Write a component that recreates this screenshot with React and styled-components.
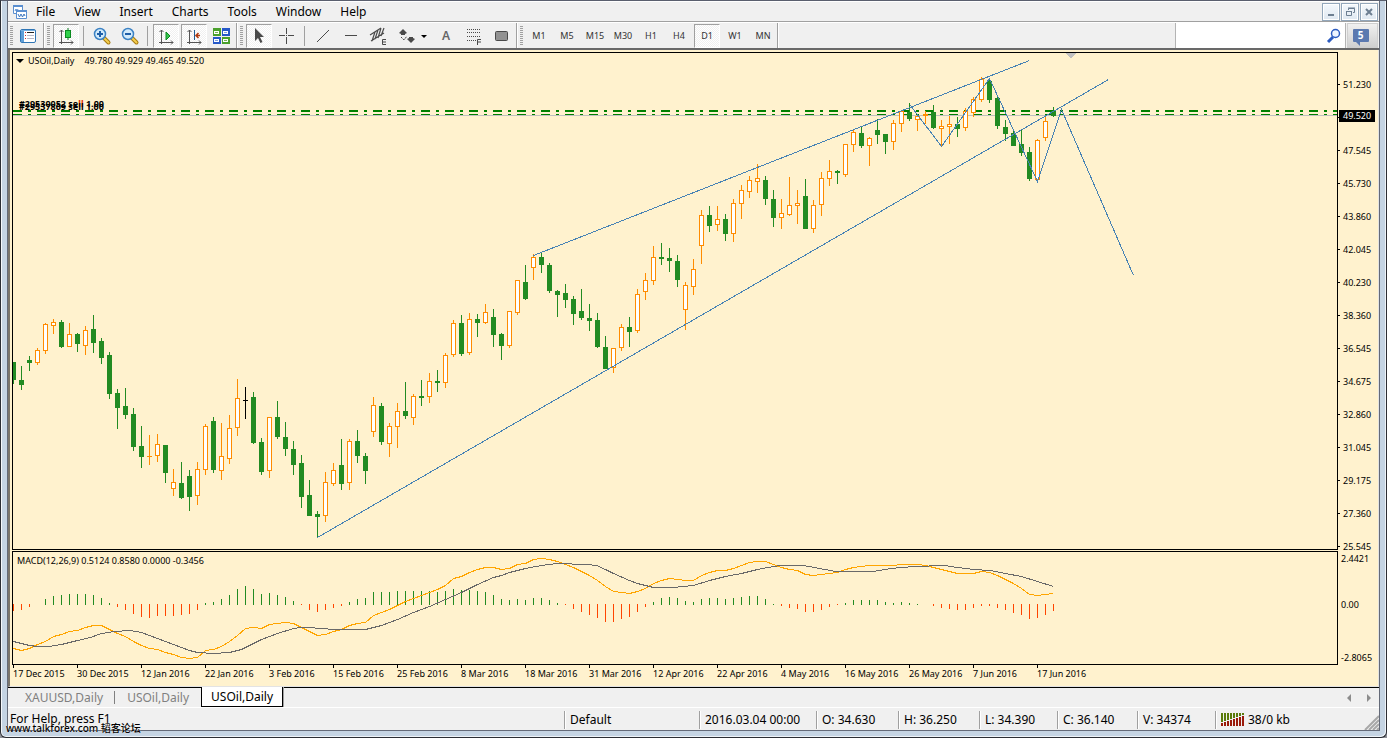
import styled, { createGlobalStyle, css } from 'styled-components'

const colors = {
  face: '#f0f0f0',
  chart: '#fff2ce',
  bear: '#228b22',
  bull: '#ff8c00',
  line: '#4682b4',
  order: '#008000',
  histogramDown: '#ff4500',
  macd: '#ffa500',
  signal: '#696969',
  icon: '#4a4a4a',
}

const MENU = ['File', 'View', 'Insert', 'Charts', 'Tools', 'Window', 'Help']
const TIMEFRAMES = ['M1', 'M5', 'M15', 'M30', 'H1', 'H4', 'D1', 'W1', 'MN']
const TABS = ['XAUUSD,Daily', 'USOil,Daily', 'USOil,Daily']
const ACTIVE_TAB = 2

// the second tick has no label of its own, the current price lies over it
const PRICES = [
  '51.230', '', '47.545', '45.730', '43.860', '42.045', '40.230', '38.360',
  '36.545', '34.675', '32.860', '31.045', '29.175', '27.360', '25.545',
]
const CURRENT_PRICE = '49.520'

const DATES = [
  '17 Dec 2015', '30 Dec 2015', '12 Jan 2016', '22 Jan 2016', '3 Feb 2016', '15 Feb 2016',
  '25 Feb 2016', '8 Mar 2016', '18 Mar 2016', '31 Mar 2016', '12 Apr 2016', '22 Apr 2016',
  '4 May 2016', '16 May 2016', '26 May 2016', '7 Jun 2016', '17 Jun 2016',
]

const STATUS = [
  { text: 'Default', width: 135 },
  { text: '2016.03.04 00:00', width: 117 },
  { text: 'O: 34.630', width: 82 },
  { text: 'H: 36.250', width: 81 },
  { text: 'L: 34.390', width: 78 },
  { text: 'C: 36.140', width: 80 },
  { text: 'V: 34374', width: 78 },
]

// [high, body top, body bottom, low, up?] one row for each day
const CANDLES = [
  [362, 362, 380, 384], [366, 380, 385, 390], [356, 360, 363, 371], [348, 350, 363, 365, 1],
  [323, 324, 351, 354, 1], [319, 322, 326, 334, 1], [320, 322, 347, 348], [323, 334, 347, 347, 1],
  [333, 334, 344, 352], [326, 330, 346, 355, 1], [315, 329, 343, 353], [338, 341, 358, 364],
  [352, 355, 394, 399], [389, 393, 408, 429], [388, 406, 415, 419], [408, 414, 447, 451],
  [426, 446, 457, 468], [435, 456, 457, 465, 1], [434, 444, 456, 462, 1], [445, 445, 473, 483],
  [469, 482, 489, 496, 1], [462, 483, 498, 499], [470, 476, 497, 511], [462, 469, 496, 505, 1],
  [424, 426, 470, 475, 1], [417, 421, 470, 473], [423, 456, 471, 480, 1], [415, 428, 459, 464, 1],
  [379, 398, 428, 436, 1], [387, 400, 401, 419], [392, 397, 443, 444], [438, 442, 472, 475],
  [417, 417, 471, 478, 1], [401, 417, 437, 439], [422, 437, 449, 456], [441, 449, 465, 475],
  [455, 463, 497, 508], [480, 495, 516, 516], [511, 514, 517, 538], [472, 482, 516, 522, 1],
  [463, 470, 484, 486, 1], [439, 465, 484, 490], [439, 441, 483, 490, 1], [430, 441, 456, 463],
  [453, 456, 471, 484], [397, 405, 432, 437, 1], [403, 406, 442, 445], [423, 426, 444, 457, 1],
  [403, 411, 427, 448, 1], [382, 411, 416, 419], [394, 396, 418, 425, 1], [380, 396, 398, 406],
  [373, 381, 397, 403, 1], [370, 381, 383, 392], [353, 355, 383, 388, 1], [320, 323, 355, 357, 1],
  [315, 323, 354, 356], [313, 319, 353, 355, 1], [314, 319, 323, 337], [304, 312, 323, 324, 1],
  [309, 317, 335, 347], [333, 334, 346, 360], [311, 311, 346, 348, 1], [280, 280, 313, 315, 1],
  [265, 282, 299, 300], [254, 257, 268, 280, 1], [253, 257, 265, 273], [263, 265, 291, 293],
  [290, 291, 295, 317], [284, 293, 300, 308], [296, 299, 314, 325], [289, 311, 318, 320],
  [304, 318, 321, 331], [313, 320, 347, 348], [336, 347, 369, 369], [348, 348, 368, 373, 1],
  [324, 327, 348, 351, 1], [317, 327, 332, 347], [289, 294, 331, 333, 1], [273, 280, 292, 300, 1],
  [246, 257, 281, 285, 1], [243, 257, 259, 265], [248, 258, 261, 272], [255, 261, 280, 287],
  [282, 285, 310, 330, 1], [259, 269, 287, 295, 1], [210, 215, 246, 264, 1], [206, 215, 226, 232],
  [206, 219, 225, 231, 1], [214, 219, 234, 241], [199, 203, 234, 242, 1], [185, 190, 204, 219, 1],
  [176, 180, 192, 198, 1], [164, 178, 182, 193, 1], [176, 180, 199, 205], [190, 199, 218, 227],
  [199, 213, 218, 229, 1], [177, 205, 215, 216, 1], [190, 203, 206, 224, 1], [179, 196, 229, 229],
  [200, 205, 229, 233, 1], [172, 178, 205, 216, 1], [160, 171, 179, 186, 1], [170, 171, 173, 184],
  [144, 144, 175, 177, 1], [130, 132, 145, 152, 1], [127, 133, 146, 148], [137, 138, 146, 166, 1],
  [119, 130, 135, 144], [134, 134, 142, 154], [120, 123, 142, 150, 1], [111, 111, 124, 132, 1],
  [103, 112, 119, 121], [115, 116, 120, 131, 1], [111, 114, 116, 124, 1], [105, 112, 128, 129],
  [120, 126, 129, 147, 1], [116, 124, 127, 144, 1], [117, 124, 129, 137], [108, 111, 128, 131, 1],
  [97, 99, 113, 117, 1], [77, 79, 100, 102, 1], [78, 81, 100, 103], [95, 98, 126, 129],
  [120, 127, 134, 141], [129, 133, 146, 146], [130, 144, 153, 156], [147, 152, 179, 181],
  [139, 140, 180, 181, 1], [117, 121, 138, 141, 1], [107, 111, 116, 117],
]
const DOJI = 29

const HISTOGRAM = [
  -7, -6, -3, 0, 6, 9, 10, 11, 11, 11, 10, 7, 2, -3, -6, -10, -13, -14, -12, -12, -12, -11, -10,
  -6, 2, 3, 6, 10, 16, 19, 16, 11, 12, 10, 8, 4, -1, -6, -8, -6, -4, -2, 3, 6, 7, 13, 13, 13, 14,
  14, 14, 14, 14, 13, 14, 16, 15, 15, 14, 13, 10, 6, 5, 6, 5, 7, 7, 5, 2, -1, -5, -8, -11, -14,
  -18, -18, -15, -13, -8, -3, 3, 7, 8, 7, 4, 3, 6, 7, 7, 6, 7, 8, 9, 9, 6, 1, -2, -4, -5, -8, -8,
  -6, -3, -1, 2, 5, 5, 5, 5, 3, 2, 3, 2, 1, 0, -2, -4, -5, -6, -6, -4, -2, -2, -4, -6, -9, -11,
  -15, -14, -11, -7,
]

const MACD_LINE = [
  648, 650, 648, 644, 641, 636, 634, 631, 630, 627, 625, 625, 629, 633, 636, 641, 645, 648, 649,
  652, 654, 657, 658, 657, 650, 649, 646, 641, 635, 628, 627, 628, 624, 623, 622, 623, 627, 631,
  635, 634, 631, 629, 625, 623, 622, 615, 612, 609, 605, 601, 598, 595, 592, 589, 585, 578, 576,
  572, 569, 567, 567, 569, 568, 564, 563, 559, 558, 559, 561, 564, 567, 571, 575, 580, 586, 591,
  592, 593, 591, 588, 583, 580, 578, 579, 580, 580, 575, 572, 570, 570, 568, 565, 562, 561, 561,
  564, 567, 569, 570, 574, 575, 574, 573, 572, 569, 567, 566, 565, 565, 565, 565, 564, 564, 564,
  565, 567, 569, 571, 573, 573, 573, 571, 572, 575, 579, 583, 588, 594, 595, 594, 593,
]

const SIGNAL_POINTS =
  '13,641 21,643 29,645 37,646 48,646 61,644 77,640 90,637 101,633 114,631 129,630 141,632 149,635 165,641 181,647 189,650 197,652 213,653 229,652 241,649 253,643 261,639 277,633 293,628 301,627 312,627 317,628 337,629 365,629 381,625 397,619 413,612 429,606 445,599 461,592 477,584 493,577 501,575 509,572 525,568 541,565 557,563 586,564 596,565 605,569 613,573 629,580 637,583 653,587 672,587 693,585 709,580 725,576 741,573 757,569 773,566 781,565 802,565 814,567 835,571 873,571 890,568 913,566 944,565 957,567 973,569 990,570 1005,573 1021,576 1037,581 1053,586'

const TREND_LINES = [
  '533,255 1029,60',
  '317,537 1108,79',
  '910,105 941,146 989,78 1037,181 1061,109 1133,275',
]

const BAR_STEP = 8
const FIRST_BAR = 13
const barX = (index) => FIRST_BAR + index * BAR_STEP

const Candle = ({ x, data, doji }) => {
  const [high, top, bottom, low, up] = data
  const color = doji ? '#000' : up ? colors.bull : colors.bear
  return (
    <g>
      <rect x={x} y={high} width={1} height={low - high} fill={color} />
      <rect x={x - 2} y={top} width={5} height={bottom - top} fill={color} />
      {up && bottom - top > 2 && (
        <rect x={x - 1} y={top + 1} width={3} height={bottom - top - 2} fill='#fff' />
      )}
    </g>
  )
}

const PriceChart = () => (
  <Canvas role='img' aria-label='USOil daily candlesticks'>
    <g transform='translate(0 -53)' stroke={colors.order} strokeDasharray='9 6 3 6'>
      <line x2='100%' y1={111} y2={111} strokeWidth={2} />
      <line x2='100%' y1={114.5} y2={114.5} />
    </g>
    <g transform='translate(-13 -53)'>
      <rect x={13} y={115} width='100%' height={1} fill='#c0c0c0' />
      <path d='M1065 53h11l-5 5h-1z' fill='#c0c0c0' />
      {CANDLES.map((data, index) => (
        <Candle key={index} x={barX(index)} data={data} doji={index === DOJI} />
      ))}
    </g>
    <g transform='translate(-12.5 -52.5)' fill='none' stroke={colors.line}>
      {TREND_LINES.map((points) => (
        <polyline key={points} points={points} />
      ))}
    </g>
  </Canvas>
)

const MacdChart = () => (
  <Canvas role='img' aria-label='MACD'>
    <g transform='translate(-13 -552)'>
      {HISTOGRAM.map((value, index) => (
        <rect
          key={index}
          x={barX(index)}
          y={value > 0 ? 605 - value : 604}
          width={1}
          height={Math.abs(value)}
          fill={value > 0 ? colors.bear : colors.histogramDown}
        />
      ))}
    </g>
    <g transform='translate(-12.5 -551.5)' fill='none'>
      <polyline
        points={MACD_LINE.map((y, index) => `${barX(index)},${y}`).join(' ')}
        stroke={colors.macd}
      />
      <polyline points={SIGNAL_POINTS} stroke={colors.signal} />
    </g>
  </Canvas>
)

const Icon = ({ children, size = 20 }) => (
  <svg width={size} height={size} viewBox={`0 0 ${size} ${size}`} fill='none' aria-hidden='true'>
    {children}
  </svg>
)

const AppIcon = () => (
  <Icon size={16}>
    <path d='M1.5 1.5h9v8h-9z' fill='#fff' stroke='#5b8fd0' />
    <path d='M1 1h10v2H1z' fill='#5b8fd0' />
    <path d='M3 7l1-2 1 2 1-2' stroke='#5b8fd0' />
    <path d='M4.500 6.500h10v8h-10z' fill='#fff' stroke='#5b8fd0' />
    <path d='M4 6h11v2H4z' fill='#5b8fd0' />
    <path d='M6 10l1.500 3 1.500-3 1.500 3 1.500-3 1 2' stroke='#3c76c0' />
  </Icon>
)

const NavigatorIcon = () => (
  <Icon>
    <rect x='1.500' y='3.500' width='15' height='13' rx='1.500' fill='#fff' stroke='#2f75b5' />
    <path d='M2 4h3v12H2z' fill='#5f9fd8' />
    <path d='M2 4.500h14' stroke='#78b0e0' />
    <path d='M6 6.500h1M6 9.500h1M6 12.500h1' stroke='#d03030' />
    <path d='M8 6.500h7' stroke='#222' />
    <path d='M8 9.500h7M8 12.500h7' stroke='#b8b8c8' />
  </Icon>
)

const Axes = () => (
  <path d='M5.500 4v14M3.500 6l2-2 2 2M3 16.500h14M15 14.500l2 2-2 2' stroke='#555' />
)

const CandleIcon = () => (
  <Icon>
    <Axes />
    <path d='M12 2v12' stroke='#0a7a20' />
    <rect x='9.500' y='4.500' width='5' height='7' fill='#2fd04a' stroke='#0a8a20' />
  </Icon>
)

const ZoomIcon = ({ plus }) => (
  <Icon>
    <path d='M11.500 11.500l5 5' stroke='#a87a10' strokeWidth='4' strokeLinecap='round' />
    <path d='M12 12l4.500 4.500' stroke='#f5cf50' strokeWidth='2' strokeLinecap='round' />
    <circle cx='8' cy='8' r='5.500' fill='#d3ebfb' stroke='#3c82c4' strokeWidth='1.500' />
    <path d={plus ? 'M5 8h6M8 5v6' : 'M5 8h6'} stroke='#1f5fa8' strokeWidth='2' />
  </Icon>
)

const AutoScrollIcon = () => (
  <Icon>
    <Axes />
    <path d='M10 6l4 4-4 4z' fill='#35c44c' stroke='#0a8a20' />
  </Icon>
)

const ShiftIcon = () => (
  <Icon>
    <Axes />
    <path d='M10.500 4v10' stroke='#1d5c94' />
    <path d='M12 9.500h4M14.500 7l-2.500 2.500 2.500 2.500' stroke='#b03a10' strokeWidth='1.500' />
  </Icon>
)

const TileIcon = () => (
  <Icon>
    <path d='M1 2h8v8H1zM10 11h8v7h-8z' fill='#4aa02c' />
    <path d='M10 2h8v8h-8zM1 11h8v7H1z' fill='#2558c8' />
    <path d='M2 5h5v3H2zM11 5h5v3h-5zM2 13h5v3H2zM11 13h5v3h-5z' fill='#fff' />
    <path d='M3 6.500h3M12 14.500h3' stroke='#7ab55c' />
    <path d='M12 6.500h3M3 14.500h3' stroke='#7ea0e0' />
  </Icon>
)

const CursorIcon = () => (
  <Icon>
    <path d='M6 2v13l3-3 2.500 5 2-1-2.500-5h4z' fill={colors.icon} />
  </Icon>
)

const CrosshairIcon = () => (
  <Icon>
    <path d='M9.500 2v6M9.500 11v7M2 9.500h6M11 9.500h6' stroke={colors.icon} />
    <path d='M9 9h1v1H9z' fill={colors.icon} />
  </Icon>
)

const LineIcon = () => (
  <Icon>
    <path d='M4 16L16 4' stroke={colors.icon} />
  </Icon>
)

const HorizontalIcon = () => (
  <Icon>
    <path d='M4 9.500h12' stroke={colors.icon} />
  </Icon>
)

const ChannelIcon = () => (
  <Icon>
    <path
      d='M1 9L12 2M2 15L15 7M3 15l3-9M6 13l3-9M9 12l3-10M12 10l3-8'
      stroke={colors.icon}
      strokeWidth='1.200'
    />
    <path d='M17 13.500h-3.500v5H17M14 16h3' stroke={colors.icon} />
  </Icon>
)

const ArrowsIcon = () => (
  <Icon>
    <path d='M6 3l4 4-2 1v1H4V8L2 7zM14 17l-4-4 2-1v-1h4v1l2 1z' fill={colors.icon} />
    <path d='M4 11l3 3 3-4' stroke={colors.icon} strokeDasharray='2 1' />
  </Icon>
)

const FibonacciIcon = () => (
  <Icon>
    <path
      d='M3 3.500h14M3 6.500h14M3 10.500h14M3 14.500h9'
      stroke={colors.icon}
      strokeDasharray='1 1'
      shapeRendering='crispEdges'
    />
    <path d='M17 13.500h-3.500V19M13 16h4' stroke={colors.icon} />
  </Icon>
)

const RectangleIcon = () => (
  <Icon>
    <rect x='3.500' y='5.500' width='12' height='9' rx='1' fill='#929292' stroke={colors.icon} />
  </Icon>
)

const SearchIcon = () => (
  <Icon size={16}>
    <path d='M7 9l-5 5' stroke='#2d5cc0' strokeWidth='3' />
    <circle cx='9.500' cy='5.500' r='4' fill='#eef5ff' stroke='#2d5cc0' strokeWidth='1.500' />
  </Icon>
)

const TrafficIcon = () => (
  <svg width='23' height='13' aria-hidden='true'>
    {[0, 1, 2, 3, 4, 5, 6, 7].map((bar) => (
      <g key={bar}>
        <rect x={bar * 3} y='0' width='2' height={9 - bar} fill='#5a7a0a' />
        <rect x={bar * 3} y={10 - bar} width='2' height={3 + bar} fill='#9a1a0a' />
      </g>
    ))}
  </svg>
)

const ToolBar = () => (
  <Tools>
    <Group>
      <Tool aria-label='Navigator'><NavigatorIcon /></Tool>
    </Group>
    <Group>
      <Tool aria-label='Candlesticks' $pressed><CandleIcon /></Tool>
      <Divider />
      <Tool aria-label='Zoom in'><ZoomIcon plus /></Tool>
      <Tool aria-label='Zoom out'><ZoomIcon /></Tool>
      <Divider />
      <Tool aria-label='Auto scroll' $pressed><AutoScrollIcon /></Tool>
      <Tool aria-label='Chart shift' $pressed><ShiftIcon /></Tool>
      <Tool aria-label='Tile windows'><TileIcon /></Tool>
    </Group>
    <Group>
      <Tool aria-label='Cursor' $pressed><CursorIcon /></Tool>
      <Tool aria-label='Crosshair'><CrosshairIcon /></Tool>
      <Divider />
      <Tool aria-label='Trendline'><LineIcon /></Tool>
      <Tool aria-label='Horizontal line'><HorizontalIcon /></Tool>
      <Tool aria-label='Equidistant channel'><ChannelIcon /></Tool>
      <Tool aria-label='Arrows'><ArrowsIcon /></Tool>
      <DropArrow aria-label='More arrows'>
        <Icon size={6}><path d='M0 2h6L3 5z' fill='#000' /></Icon>
      </DropArrow>
      <Tool $letter>A</Tool>
      <Tool aria-label='Fibonacci'><FibonacciIcon /></Tool>
      <Tool aria-label='Rectangle'><RectangleIcon /></Tool>
    </Group>
    <Group>
      {TIMEFRAMES.map((name) => (
        <Tool key={name} $pressed={name === 'D1'}>{name}</Tool>
      ))}
    </Group>
    <Search>
      <SearchInput aria-label='Search' />
      <SearchIcon />
    </Search>
    <Messages aria-label='5 messages'>
      <Bubble>5</Bubble>
    </Messages>
  </Tools>
)

const App = () => (
  <>
    <GlobalStyle />
    <Window>
      <Client>
        <MenuBar>
          <AppIcon />
          <MenuItems>
            {MENU.map((name) => (
              <MenuItem key={name}>{name}</MenuItem>
            ))}
          </MenuItems>
          <WindowButton aria-label='Minimize'>
            <Icon size={12}><path d='M3 9h6' stroke='#6d7f92' strokeWidth='2' /></Icon>
          </WindowButton>
          <WindowButton aria-label='Restore'>
            <Icon size={12}>
              <path d='M4.500 4V2.500h6v4H9M4 2h7M2.500 5.500h5v4h-5zM2 5.500h6' stroke='#6d7f92' />
            </Icon>
          </WindowButton>
          <WindowButton aria-label='Close'>
            <Icon size={12}><path d='M3 3l6 6M9 3l-6 6' stroke='#6d7f92' strokeWidth='2' /></Icon>
          </WindowButton>
        </MenuBar>
        <ToolBar />
        <ChartWindow>
          <Plot>
            <PriceChart />
            <Caption>
              <Triangle />
              <span>USOil,Daily</span>
              <Quotes>49.780 49.929 49.465 49.520</Quotes>
            </Caption>
            <Order $top={45}>#29530052 se<em>ll</em> 1.00</Order>
            <Order $top={48}>#29537809 sell 1.00</Order>
          </Plot>
          <PriceAxis>
            {PRICES.map((price) => (
              <Price key={price}>{price}</Price>
            ))}
            <PriceTag>{CURRENT_PRICE}</PriceTag>
          </PriceAxis>
          <Plot>
            <MacdChart />
            <Caption $indicator>MACD(12,26,9) 0.5124 0.8580 0.0000 -0.3456</Caption>
          </Plot>
          <MacdAxis>
            <span>2.4421</span>
            <span>0.00</span>
            <span>-2.8065</span>
          </MacdAxis>
          <TimeAxis>
            {DATES.map((date) => (
              <DateLabel key={date}>{date}</DateLabel>
            ))}
          </TimeAxis>
        </ChartWindow>
        <TabBar>
          {TABS.map((name, index) => (
            <Tab key={index} $active={index === ACTIVE_TAB}>{name}</Tab>
          ))}
          <Scroller aria-label='Scroll left' $first>
            <Icon size={8}><path d='M6 0v8L2 4z' fill='#8c8c8c' /></Icon>
          </Scroller>
          <Scroller aria-label='Scroll right'>
            <Icon size={8}><path d='M2 0v8l4-4z' fill='#8c8c8c' /></Icon>
          </Scroller>
        </TabBar>
        <StatusBar>
          <Help>For Help, press F1</Help>
          {STATUS.map(({ text, width }) => (
            <Cell key={text} $width={width}>{text}</Cell>
          ))}
          <Cell $width={164}>
            <TrafficIcon />
            38/0 kb
            <Grip>
              <Icon size={15}>
                <path d='M1 15L15 1M5 15L15 5M9 15l6-6M13 15l2-2' stroke='#a8a8a8' strokeWidth='2' />
              </Icon>
            </Grip>
          </Cell>
        </StatusBar>
      </Client>
      <Watermark>www.talkforex.com 韬客论坛</Watermark>
    </Window>
  </>
)

export default App

const GlobalStyle = createGlobalStyle`
  * {
    box-sizing: border-box;
  }

  body {
    margin: 0;
    background: #8f9198;
    font-family: 'Noto Sans', 'Noto Sans CJK SC', sans-serif;
    font-size: 12px;
    color: #000;
  }

  button {
    margin: 0;
    padding: 0;
    border: 0;
    background: none;
    font: inherit;
    color: inherit;
  }

  svg {
    display: block;
    flex: none;
  }
`

const Window = styled.div`
  position: relative;
  display: flex;
  min-height: 100vh;
  padding: 0 6px 6px;
  border: 1px solid #2b2d33;
  border-top-color: #5a5f6e;
  border-radius: 0 0 6px 6px;
  background: #c5d4e3;
  box-shadow: inset 1px 0 #f5f8fb, inset -1px -1px #eef3f8;
`

const Client = styled.div`
  flex: 1;
  min-width: 0;
  display: flex;
  flex-direction: column;
  border: 1px solid #646a78;
  border-top: 0;
  background: ${colors.face};
`

const MenuBar = styled.header`
  height: 21px;
  display: flex;
  align-items: center;
  padding: 0 1px 0 4px;
  border-top: 1px solid #fff;
  border-bottom: 1px solid #a0a0a0;
`

const MenuItems = styled.nav`
  flex: 1;
  display: flex;
  gap: 3px;
`

const MenuItem = styled.button`
  padding: 0 8px;
  line-height: 18px;
`

const WindowButton = styled.button`
  width: 18px;
  height: 18px;
  display: flex;
  align-items: center;
  justify-content: center;
  margin-left: 1px;
  border: 1px solid #93a7bb;
  background: linear-gradient(#f4f8fc, #dfe8f1);
  box-shadow: inset 0 0 0 1px #fff;
`

const Tools = styled.div`
  height: 28px;
  display: flex;
  border-top: 1px solid #fff;
  border-bottom: 2px solid #696969;
`

const Group = styled.div`
  display: flex;
  align-items: center;
  border-right: 1px solid #a0a0a0;
  box-shadow: 1px 0 #fff;
  margin-right: 1px;

  &::before {
    content: '';
    width: 3px;
    height: 19px;
    margin: 0 2px;
    background: repeating-linear-gradient(#a0a0a0 0 1px, ${colors.face} 1px 2px);
  }
`

const Tool = styled.button`
  width: 26px;
  height: 24px;
  margin: 0 1px;
  display: flex;
  align-items: center;
  justify-content: center;
  border: 1px solid transparent;
  font-size: 9px;
  color: #333;
  ${({ $letter }) =>
    $letter &&
    css`
      font-size: 12px;
      font-weight: 600;
      color: #666;
    `}
  ${({ $pressed }) =>
    $pressed &&
    css`
      border-color: #a0a0a0 #fff #fff #a0a0a0;
      background: repeating-conic-gradient(#fff 0 25%, ${colors.face} 0 50%) 0 0 / 2px 2px;
    `}
`

const Divider = styled.span`
  width: 1px;
  height: 20px;
  margin: 0 4px 0 3px;
  background: #a0a0a0;
`

const DropArrow = styled.button`
  width: 11px;
  height: 24px;
  display: flex;
  align-items: center;
`

const Search = styled.label`
  width: 171px;
  display: flex;
  align-items: center;
  margin-left: auto;
  padding-right: 3px;
  border: 1px solid #b4b4b4;
  border-width: 0 1px;
  background: #fff;
`

const SearchInput = styled.input`
  flex: 1;
  min-width: 0;
  border: 0;
  outline: 0;
  background: none;
  font: inherit;
`

const Messages = styled.button`
  width: 31px;
  display: flex;
  align-items: center;
  justify-content: center;
  margin: 0 1px;
  padding-right: 4px;
  border: 1px solid #cfcfcf;
  background: linear-gradient(#f0f0f0, #d0d0d0);
`

const Bubble = styled.span`
  position: relative;
  width: 16px;
  height: 13px;
  border-radius: 1px;
  background: #5b79b0;
  color: #fff;
  font-size: 10px;
  font-weight: 700;
  line-height: 13px;

  &::after {
    content: '';
    position: absolute;
    left: 3px;
    top: 13px;
    border: 2px solid transparent;
    border-top-color: #5b79b0;
    border-right-color: #5b79b0;
  }
`

const ChartWindow = styled.main`
  flex: 1;
  min-height: 0;
  display: grid;
  grid-template-columns: 1fr 40px;
  grid-template-rows: minmax(0, 1fr) 114px 20px;
  row-gap: 1px;
  padding: 2px 0 0 2px;
  border: 1px solid #e3e3e3;
  border-width: 0 1px 1px 2px;
  border-left-color: #7b766c;
  background: ${colors.chart};
  font-size: 9px;
`

const Plot = styled.section`
  position: relative;
  min-width: 0;
  border: 1px solid #000;
  overflow: hidden;
`

const Canvas = styled.svg`
  width: 100%;
  height: 100%;
  shape-rendering: crispEdges;
`

const Caption = styled.div`
  position: absolute;
  top: 2px;
  left: 3px;
  display: flex;
  align-items: center;
  gap: 4px;
  line-height: 12px;
  white-space: pre;
  ${({ $indicator }) =>
    $indicator &&
    css`
      top: 3px;
      left: 4px;
    `}
`

const Quotes = styled.span`
  margin-left: 6px;
`

const Triangle = styled.i`
  border: 4px solid transparent;
  border-top-color: #000;
  border-bottom: 0;
`

const Order = styled.div`
  position: absolute;
  top: ${({ $top }) => $top}px;
  left: 6px;
  font-weight: 700;
  line-height: 12px;

  em {
    font-style: normal;
    color: #e03000;
  }
`

// the labels may run past the plot's bottom edge, so they never size the row
const PriceAxis = styled.div`
  position: relative;
  height: 0;
  padding-top: 16px;
`

const Price = styled.div`
  height: 33px;
  display: flex;
  align-items: center;
  gap: 3px;

  &::before {
    content: '';
    width: 2px;
    height: 1px;
    background: #000;
  }
`

const PriceTag = styled.b`
  position: absolute;
  top: 58px;
  left: 1px;
  padding: 0 4px;
  background: #000;
  color: #fff;
  font-weight: 400;
  line-height: 12px;
`

const MacdAxis = styled.div`
  display: grid;
  grid-template-rows: 16px 75px 1fr;
  align-items: center;
  padding-left: 3px;
  line-height: 14px;

  span:last-child {
    align-self: end;
  }
`

const TimeAxis = styled.div`
  grid-column: 1 / -1;
  display: flex;
  margin: -1px 0 0 1px;
`

const DateLabel = styled.span`
  flex: none;
  width: 64px;
  line-height: 12px;
  white-space: nowrap;

  &::before {
    content: '';
    display: block;
    width: 1px;
    height: 3px;
    background: #000;
  }
`

const TabBar = styled.nav`
  height: 20px;
  display: flex;
  padding-left: 5px;
  border-top: 1px solid #000;
`

const Tab = styled.button`
  display: flex;
  align-items: center;
  padding: 0 12px;
  color: #808080;
  line-height: 16px;

  &:first-child {
    position: relative;
  }

  &:first-child::after {
    content: '';
    position: absolute;
    right: 0;
    width: 1px;
    height: 13px;
    background: #808080;
  }

  ${({ $active }) =>
    $active &&
    css`
      height: 20px;
      margin-top: -1px;
      padding: 0 9px;
      border: 1px solid #000;
      border-top: 0;
      background: #fff;
      color: #000;
      box-shadow: 1px 0 #a0a0a0;
    `}
`

const Scroller = styled.button`
  width: 20px;
  display: flex;
  align-items: center;
  justify-content: center;
  margin-left: ${({ $first }) => ($first ? 'auto' : 0)};
`

const StatusBar = styled.footer`
  height: 23px;
  display: flex;
  border-top: 1px solid #fff;
`

const Help = styled.div`
  flex: 1;
  padding-left: 2px;
  line-height: 22px;
`

const Cell = styled.div`
  position: relative;
  width: ${({ $width }) => $width}px;
  display: flex;
  align-items: center;
  gap: 4px;
  padding-left: 6px;
  white-space: nowrap;

  &::before {
    content: '';
    position: absolute;
    left: 0;
    top: 3px;
    bottom: 1px;
    width: 1px;
    background: #a0a0a0;
    box-shadow: 1px 0 #fff;
  }
`

const Grip = styled.span`
  align-self: flex-end;
  margin-left: auto;
`

const Watermark = styled.div`
  position: absolute;
  left: 5px;
  bottom: 2px;
  font-size: 10px;
  line-height: 14px;
  font-weight: 500;
  text-shadow: 0 0 1px #fff;
`
